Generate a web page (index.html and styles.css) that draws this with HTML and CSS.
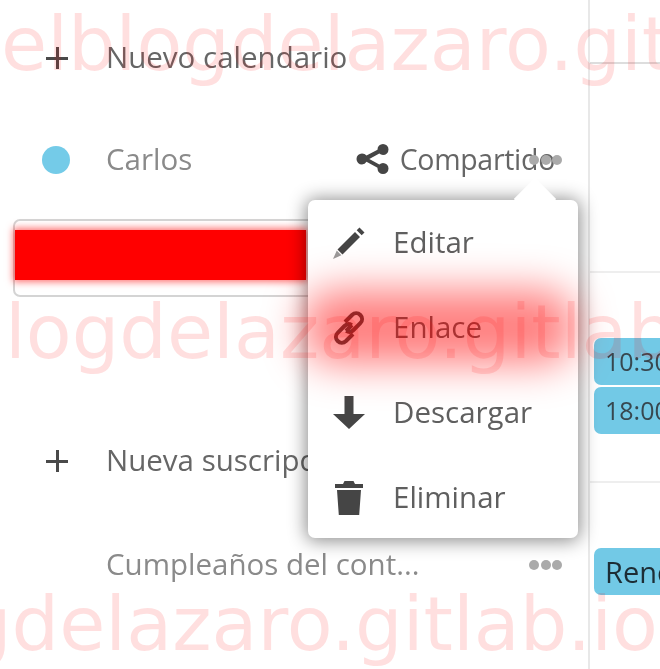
FILE: index.html
```html
<!DOCTYPE html>
<html lang="es">
<head>
    <meta charset="UTF-8">
    <title>Calendario</title>
    <link rel="stylesheet" href="styles.css">
</head>
<body>
    <div class="app">
        <div class="sidebar">
            <div class="row row-first">
                <span class="row-icon plus"></span>
                <span class="row-label strong">Nuevo calendario</span>
            </div>
            <div class="row row-carlos">
                <span class="row-icon"><span class="dot"></span></span>
                <span class="row-label">Carlos</span>
                <span class="shared">
                    <svg class="share-icon" viewBox="0 0 34 34"><path d="M27 2a5.500 5.500 0 0 1 0 11 5.400 5.400 0 0 1-3.700-1.500l-10 5.500 10 5.500A5.400 5.400 0 0 1 27 21a5.500 5.500 0 0 1 0 11 5.500 5.500 0 0 1-5.500-5.500v-.8l-11-5.900A5.500 5.500 0 0 1 6 22.500a5.500 5.500 0 0 1 0-11c1.800 0 3.400.8 4.500 2.100l11-5.900v-.2A5.500 5.500 0 0 1 27 2z"/></svg>
                    Compartido
                </span>
                <span class="dots dots-faint"><i></i><i></i><i></i></span>
            </div>
            <div class="link-box"><div class="censored"></div></div>
            <div class="row row-subscribe">
                <span class="row-icon plus"></span>
                <span class="row-label strong">Nueva suscripción</span>
            </div>
            <div class="row row-birthdays">
                <span class="row-icon"></span>
                <span class="row-label">Cumpleaños del cont...</span>
                <span class="dots"><i></i><i></i><i></i></span>
            </div>
        </div>

        <div class="calendar">
            <div class="cell cell-top"></div>
            <div class="cell cell-empty"></div>
            <div class="cell">
                <div class="event event-small">10:30</div>
                <div class="event event-small">18:00</div>
            </div>
            <div class="cell cell-last">
                <div class="event">Reno</div>
            </div>
        </div>
    </div>

    <div class="popover">
        <div class="menu-item">
            <svg class="menu-icon" viewBox="0 0 34 34"><path d="M27.500 1.500l5 5-2.800 2.800-5-5zM23 6l5 5L10.500 28.500l-5-5z"/><path d="M4.800 24.600l4.600 4.600L1 33z" opacity=".55"/></svg>
            <span>Editar</span>
        </div>
        <div class="menu-item">
            <svg class="menu-icon link-icon" viewBox="0 0 34 34"><path d="M20 14l-6 6"/><path d="M13 11l7-7c2.500-2.300 6-2.300 8.300 0s2.400 5.800 0 8.200l-6.800 6.800c-2 2-5 2.300-7.300.8"/><path d="M21 23l-7 7c-2.500 2.300-6 2.300-8.300 0s-2.400-5.800 0-8.200l6.800-6.800c2-2 5-2.300 7.300-.8"/></svg>
            <span>Enlace</span>
        </div>
        <div class="menu-item">
            <svg class="menu-icon" viewBox="0 0 34 34"><path d="M12.500 0h9v18H33L17 33 1 18h11.500z"/></svg>
            <span>Descargar</span>
        </div>
        <div class="menu-item">
            <svg class="menu-icon" viewBox="0 0 34 34"><path d="M11 3l1.500-3h9L23 3h8v4H3V3zM5 9h24l-1.800 25H6.800z"/></svg>
            <span>Eliminar</span>
        </div>
    </div>

    <div class="glow"></div>

    <div class="watermark mark-one">elblogdelazaro.gitlab.io</div>
    <div class="watermark mark-two">logdelazaro.gitlab.io</div>
    <div class="watermark mark-three">gdelazaro.gitlab.io</div>
</body>
</html>
```

FILE: styles.css
```css
html, body {
    margin: 0;
    padding: 0;
    height: 100%;
    overflow: hidden;
    background: #fff;
}
body {
    position: relative;
    font-family: "Open Sans", sans-serif;
    font-size: 29.5px;
    color: #555;
}
.app {
    display: flex;
    height: 669px;
    filter: blur(0.7px);
}
.sidebar {
    width: 588px;
    border-right: 2px solid #e8e8e8;
    flex-shrink: 0;
}
.row {
    display: flex;
    align-items: center;
    height: 88px;
    padding-right: 26px;
}
.row-first {
    height: 116px;
}
.row-subscribe {
    height: 100px;
    margin-top: 114px;
}
.row-birthdays {
    margin-top: 10px;
}
.row-icon {
    width: 106px;
    flex-shrink: 0;
    display: flex;
}
.row-label {
    flex: 1;
    color: #8a8a8a;
    white-space: nowrap;
    line-height: 40px;
    margin-top: -2px;
}
.row-label.strong {
    color: #666;
}
.plus {
    position: relative;
    height: 22px;
}
.plus::before,
.plus::after {
    content: '';
    position: absolute;
    background: #4a4a4a;
}
.plus::before {
    left: 46px;
    top: 10px;
    width: 22px;
    height: 2.500px;
}
.plus::after {
    left: 56px;
    top: 0;
    width: 2.500px;
    height: 22px;
}
.dot {
    width: 28px;
    height: 28px;
    margin-left: 42px;
    border-radius: 50%;
    background: #74cbe8;
}
.shared {
    display: flex;
    align-items: center;
    gap: 10px;
    color: #666;
    font-size: 28.500px;
    letter-spacing: -0.3px;
    margin-right: 7px;
    margin-top: -2px;
}
.share-icon {
    width: 34px;
    height: 34px;
    fill: #454545;
}
.dots {
    display: flex;
    gap: 1.500px;
    margin-left: -33px;
}
.dots i {
    width: 10px;
    height: 10px;
    border-radius: 50%;
    background: #aaa;
}
.link-box {
    box-sizing: border-box;
    width: 400px;
    height: 78px;
    margin: 15px 0 0 13px;
    padding-top: 9px;
    border: 2px solid #d4d4d4;
    border-radius: 7px;
}
.censored {
    width: 291px;
    height: 50px;
    background: #f00;
    box-shadow: 0 0 7px 2px rgba(255, 0, 0, 0.55);
}
.calendar {
    flex: 1;
    min-width: 0;
    overflow: hidden;
}
.cell {
    box-sizing: border-box;
    height: 210px;
    padding: 65px 0 0 4px;
    border-bottom: 2px solid #eee;
}
.cell-top {
    height: 64px;
    padding: 0;
    border-bottom-color: #ddd;
}
.cell-empty {
    height: 209px;
    padding: 0;
}
.cell-last {
    border-bottom: 0;
}
.event {
    box-sizing: border-box;
    width: 90px;
    height: 47px;
    margin-bottom: 2px;
    padding-left: 11px;
    border-radius: 7px;
    background: #72c9e6;
    color: #1d2d35;
    line-height: 47px;
    font-size: 29px;
    white-space: nowrap;
}
.event-small {
    font-size: 25px;
    color: #37474f;
}
.popover {
    position: absolute;
    left: 308px;
    top: 200px;
    width: 270px;
    height: 338px;
    background: #fff;
    border-radius: 7px;
    box-shadow: 0 1px 18px 2px rgba(0, 0, 0, 0.45);
    filter: blur(0.7px);
}
.popover::after {
    content: '';
    position: absolute;
    left: 212px;
    top: -16px;
    width: 30px;
    height: 30px;
    background: #fff;
    transform: rotate(45deg);
}
.menu-item {
    position: relative;
    z-index: 1;
    display: flex;
    align-items: center;
    gap: 27px;
    height: 85px;
    padding-left: 24px;
    color: #5f5f5f;
    line-height: 40px;
}
.menu-item span {
    margin-top: -1px;
}
.menu-icon {
    width: 34px;
    height: 34px;
    fill: #454545;
    flex-shrink: 0;
}
.link-icon {
    fill: none;
    stroke: #454545;
    stroke-width: 4;
}
.glow {
    position: absolute;
    left: 304px;
    top: 290px;
    width: 270px;
    height: 74px;
    background: rgba(255, 0, 0, 0.5);
    border-radius: 30px;
    filter: blur(20px);
    pointer-events: none;
}
.watermark {
    position: absolute;
    font-family: "DejaVu Sans", sans-serif;
    font-size: 75px;
    line-height: 90px;
    white-space: nowrap;
    color: rgba(255, 0, 0, 0.125);
    filter: blur(0.5px);
    pointer-events: none;
}
.mark-one {
    left: 1px;
    top: -1px;
}
.mark-two {
    left: 5px;
    top: 287px;
}
.mark-three {
    left: -36px;
    top: 579px;
}
```
